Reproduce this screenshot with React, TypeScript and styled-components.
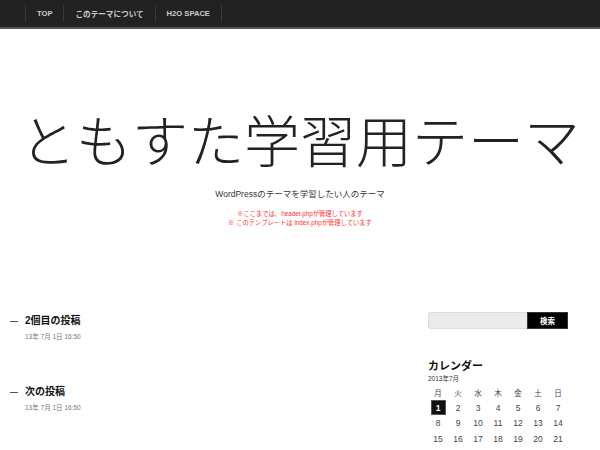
import React from "react";
import styled, { createGlobalStyle } from "styled-components";

const GlobalStyle = createGlobalStyle`
  html, body {
    margin: 0;
    padding: 0;
    background: #fff;
    font-family: "Liberation Sans", "Noto Sans CJK JP", sans-serif;
    color: #222;
  }
`;

const navItems = ["TOP", "このテーマについて", "H2O SPACE"];

const posts = [
  { title: "2個目の投稿", date: "13年 7月 1日 16:50" },
  { title: "次の投稿", date: "13年 7月 1日 16:50" },
];

const weekDays = ["月", "火", "水", "木", "金", "土", "日"];
const weeks = [
  [1, 2, 3, 4, 5, 6, 7],
  [8, 9, 10, 11, 12, 13, 14],
  [15, 16, 17, 18, 19, 20, 21],
];

const App = () => {
  return (
    <>
      <GlobalStyle />
      <Page>
        <NavBar>
          <NavList>
            {navItems.map((item) => (
              <NavItem key={item}>{item}</NavItem>
            ))}
          </NavList>
        </NavBar>

        <Header>
          <SiteTitle>ともすた学習用テーマ</SiteTitle>
          <Tagline>WordPressのテーマを学習したい人のテーマ</Tagline>
          <Notice>
            ※ここまでは、header.phpが管理しています
            <br />※ このテンプレートは index.phpが管理しています
          </Notice>
        </Header>

        <Body>
          <Main>
            {posts.map((post) => (
              <Post key={post.title}>
                <PostTitle>
                  <Dash />
                  {post.title}
                </PostTitle>
                <PostDate>{post.date}</PostDate>
              </Post>
            ))}
          </Main>

          <Sidebar>
            <SearchForm>
              <SearchInput type="text" />
              <SearchButton type="button">検索</SearchButton>
            </SearchForm>

            <Widget>
              <WidgetTitle>カレンダー</WidgetTitle>
              <Caption>2013年7月</Caption>
              <Calendar>
                <thead>
                  <tr>
                    {weekDays.map((d) => (
                      <DayHead key={d}>{d}</DayHead>
                    ))}
                  </tr>
                </thead>
                <tbody>
                  {weeks.map((week, i) => (
                    <tr key={i}>
                      {week.map((day) => (
                        <DayCell key={day}>
                          <DayMark $today={day === 1}>{day}</DayMark>
                        </DayCell>
                      ))}
                    </tr>
                  ))}
                </tbody>
              </Calendar>
            </Widget>
          </Sidebar>
        </Body>
      </Page>
    </>
  );
};

const Page = styled.div`
  width: 600px;
  height: 450px;
  overflow: hidden;
`;

const NavBar = styled.nav`
  height: 27px;
  background: #222;
  border-bottom: 2px solid #555;
  padding-left: 25px;
`;

const NavList = styled.ul`
  display: flex;
  margin: 0;
  padding: 0;
  list-style: none;
  height: 100%;
  width: max-content;
`;

const NavItem = styled.li`
  display: flex;
  align-items: center;
  padding: 0 11px;
  border-right: 1px solid #3a3a3a;
  color: #ccc;
  font-size: 7.6px;
  font-weight: bold;
  margin: 5px 0;

  &:first-child {
    border-left: 1px solid #3a3a3a;
  }
`;

const Header = styled.header`
  display: flex;
  flex-direction: column;
  align-items: center;
  padding-top: 69px;
  height: 254px;
  box-sizing: border-box;
`;

const SiteTitle = styled.h1`
  margin: 0;
  font-family: "Noto Sans CJK JP", sans-serif;
  font-weight: 300;
  font-size: 56px;
  line-height: 80px;
  white-space: nowrap;
  color: #222;
`;

const Tagline = styled.p`
  margin: 9px 0 0;
  font-size: 8.5px;
  color: #333;
`;

const Notice = styled.p`
  margin: 10px 0 0;
  font-size: 6.3px;
  line-height: 9px;
  color: #f33;
  text-align: center;
`;

const Body = styled.div`
  display: flex;
  justify-content: space-between;
  padding: 29px 32px 0 10px;
`;

const Main = styled.main`
  display: flex;
  flex-direction: column;
  gap: 44px;
  padding-top: 2px;
`;

const Post = styled.article``;

const PostTitle = styled.h2`
  display: flex;
  align-items: center;
  margin: 0;
  font-size: 10px;
  font-weight: bold;
  color: #111;
  line-height: 14px;
`;

const Dash = styled.span`
  display: inline-block;
  width: 8px;
  height: 1px;
  background: #555;
  margin-right: 7px;
`;

const PostDate = styled.div`
  margin: 3px 0 0 15px;
  font-size: 6.5px;
  color: #777;
`;

const Sidebar = styled.aside`
  width: 140px;
`;

const SearchForm = styled.form`
  display: flex;
  height: 17px;
  margin: 0;
`;

const SearchInput = styled.input`
  flex: 1;
  min-width: 0;
  margin: 0;
  padding: 0 4px;
  border: 1px solid #ddd;
  border-right: none;
  border-radius: 3px 0 0 3px;
  background: #ebebeb;
  box-sizing: border-box;
  height: 100%;
`;

const SearchButton = styled.button`
  width: 41px;
  height: 100%;
  margin: 0;
  padding: 0;
  border: 1px solid #333;
  background: #000;
  color: #fff;
  font-family: "Noto Sans CJK JP", sans-serif;
  font-size: 7.5px;
  font-weight: bold;
`;

const Widget = styled.section`
  margin-top: 29px;
`;

const WidgetTitle = styled.h3`
  margin: 0;
  font-family: "Noto Sans CJK JP", sans-serif;
  font-size: 11px;
  font-weight: bold;
  line-height: 14px;
  color: #111;
`;

const Caption = styled.div`
  font-size: 6.5px;
  color: #333;
  margin-top: 1px;
`;

const Calendar = styled.table`
  border-collapse: collapse;
  width: 140px;
  margin-top: 2px;
  font-size: 8.5px;
  color: #444;
`;

const DayHead = styled.th`
  font-weight: normal;
  font-family: "Noto Sans CJK JP", sans-serif;
  font-size: 7.5px;
  height: 15px;
  padding: 0;
  text-align: center;
  color: #444;
`;

const DayCell = styled.td`
  height: 15.5px;
  padding: 0;
  text-align: center;
`;

const DayMark = styled.span<{ $today: boolean }>`
  display: inline-flex;
  align-items: center;
  justify-content: center;
  width: 13px;
  height: 13px;
  background: ${(p) => (p.$today ? "#111" : "transparent")};
  border: 1px solid ${(p) => (p.$today ? "#555" : "transparent")};
  color: ${(p) => (p.$today ? "#fff" : "#444")};
  font-weight: ${(p) => (p.$today ? "bold" : "normal")};
`;

export default App;
